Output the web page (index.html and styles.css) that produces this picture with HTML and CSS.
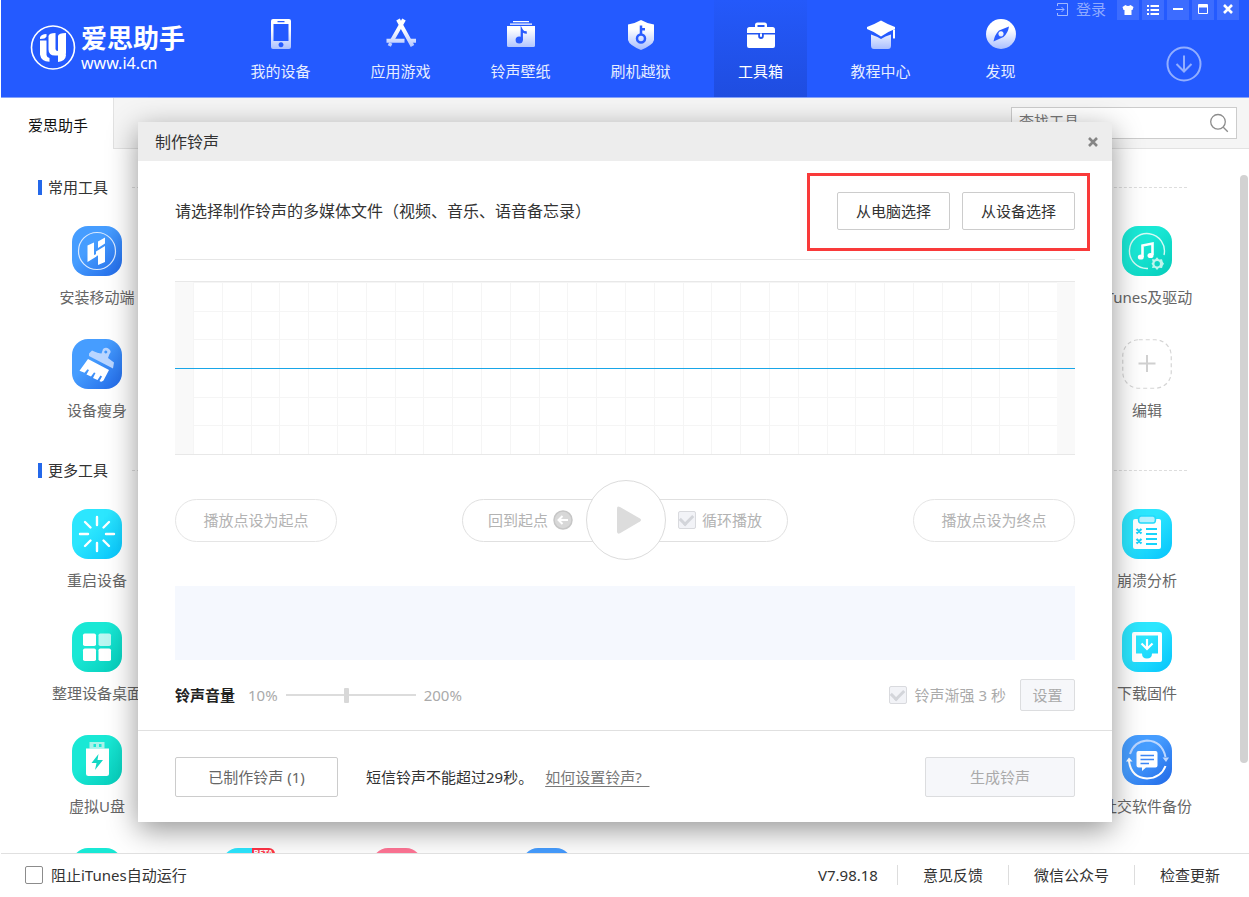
FILE: index.html
```html
<!DOCTYPE html>
<html lang="zh-CN">
<head>
<meta charset="utf-8">
<title>爱思助手</title>
<link rel="stylesheet" href="styles.css">
</head>
<body>
<svg class="defs" width="0" height="0" aria-hidden="true">
  <defs>
    <linearGradient id="fade" x1="0" y1="0" x2="0" y2="32" gradientUnits="userSpaceOnUse"><stop offset=".35" stop-color="#fff"/><stop offset="1" stop-color="#a6bcff"/></linearGradient>
  </defs>
</svg>
<div class="app">
  <header class="top">
    <a class="logo" href="#">
      <svg width="46" height="46" viewBox="0 0 46 46">
        <circle cx="23" cy="23.500" r="21.500" fill="none" stroke="#fff" stroke-width="1.600"/>
        <path fill="#fff" d="M10 13.500q1-3.500 6.500-3.500v2.500q-1 2.500-6.500 2.500zM10 16.500h6.500V31q.3 2.500 3 3v3.800q-8.500-.3-9.500-7.300zM18.500 12q.5-3 7-3v16q0 2 2.500 2V12q.5-3 8-3v20q-.5 1.500 0 2.200-.5 6-8 6.800V31.500h-3q-6.500 0-6.500-6z"/>
      </svg>
      <span class="logo-words"><span class="logo-name">爱思助手</span><span class="logo-url">www.i4.cn</span></span>
    </a>
    <nav class="nav">
      <a class="nav-item" href="#">
        <svg class="nav-icon" viewBox="0 0 32 32"><path fill="url(#fade)" fill-rule="evenodd" d="M8 1h16a2 2 0 0 1 2 2v26a2 2 0 0 1-2 2H8a2 2 0 0 1-2-2V3a2 2 0 0 1 2-2zM8.500 6v17h15V6zM12.500 3v1.200h7V3zM16 24.200a2.500 2.500 0 1 0 .01 0z"/></svg>
        <span>我的设备</span>
      </a>
      <a class="nav-item" href="#">
        <svg class="nav-icon" viewBox="0 0 32 32"><g fill="none" stroke="url(#fade)" stroke-width="4"><path d="M13 1.500L27.500 28M19 1.500L7.300 22"/><path d="M1.500 22.700h18M25.500 22.700h5.500"/><path d="M5.800 25l-1.500 3" stroke-width="3.500"/></g></svg>
        <span>应用游戏</span>
      </a>
      <a class="nav-item" href="#">
        <svg class="nav-icon" viewBox="0 0 32 32"><path fill="#fff" d="M8 3h16v1.300H8zM5 5.500h22v1.300H5z"/><path fill="url(#fade)" d="M2 8h28v19.500a1.500 1.500 0 0 1-1.500 1.500h-25A1.500 1.500 0 0 1 2 27.500z"/><circle cx="14.200" cy="22" r="3.600" fill="#2a5cff"/><path d="M16.800 22.500V12q1.500 2.700 5 2.500" fill="none" stroke="#2a5cff" stroke-width="2.300"/></svg>
        <span>铃声壁纸</span>
      </a>
      <a class="nav-item" href="#">
        <svg class="nav-icon" viewBox="0 0 32 32"><path fill="url(#fade)" d="M16 2q6 3.500 13 4.500V22q-1 5-13 10Q4 27 3 22V6.500Q10 5.500 16 2z"/><circle cx="16" cy="20.500" r="4" fill="none" stroke="#2a5cff" stroke-width="2.500"/><path d="M16 17V7.500M16 11.300h4" stroke="#2a5cff" stroke-width="2.500" fill="none"/></svg>
        <span>刷机越狱</span>
      </a>
      <a class="nav-item nav-active" href="#">
        <svg class="nav-icon" viewBox="0 0 32 32"><path fill="#fff" fill-rule="evenodd" d="M2 15V11.500Q2 9 4.500 9H10V7q0-2.500 2.500-2.500h7Q22 4.500 22 7v2h5.500Q30 9 30 11.500V15zM12.500 9h7V7h-7zM2 16.500h11.200v1.700a2.800 2.800 0 0 0 5.600 0v-1.700H30V28a2 2 0 0 1-2 2H4a2 2 0 0 1-2-2z"/><path d="M15 15.500h2V18a1 1 0 0 1-2 0z" fill="#fff"/></svg>
        <span>工具箱</span>
      </a>
      <a class="nav-item" href="#">
        <svg class="nav-icon" viewBox="0 0 32 32"><path fill="#fff" d="M16 2.500q6 3.500 14 6.500v2q-8 3-14 7.500Q10 14 2 11V9Q10 6 16 2.500z"/><path fill="#fff" d="M28 11.500h2V20q-1 1.500-2 0z"/><path fill="url(#fade)" d="M6 16.500q6 2 10 4.500 4-3 10-4.500v11q0 3.500-3 3.500H9q-3 0-3-3.500z"/></svg>
        <span>教程中心</span>
      </a>
      <a class="nav-item" href="#">
        <svg class="nav-icon" viewBox="0 0 32 32"><circle cx="16" cy="16" r="15" fill="url(#fade)"/><path fill="#2a5cff" fill-rule="evenodd" d="M24 8.500q-1 6.500-5.500 10.500L8.500 23.500Q9.500 17 14 12.500zM16 13.300a2.600 2.600 0 1 0 .01 0z"/></svg>
        <span>发现</span>
      </a>
    </nav>
    <div class="top-side">
      <div class="win-bar">
        <a class="login" href="#">
          <svg width="13" height="15" viewBox="0 0 13 15" fill="none" stroke="#a0b8ff"><path d="M1.500 4V1.500h10v12h-10V11M0 7.500h8M5.500 5l2.500 2.500L5.500 10"/></svg>
          登录
        </a>
        <div class="win-buttons">
          <button class="win-btn" aria-label="换肤"><svg width="12" height="12" viewBox="0 0 12 12"><path fill="#fff" d="M3.500 1Q6 3 8.500 1L11.500 3 10.500 6H9.500v5h-7V6H1.500L.5 3z"/></svg></button>
          <button class="win-btn" aria-label="菜单"><svg width="12" height="12" viewBox="0 0 12 12"><path stroke="#fff" stroke-width="2" d="M0 2h2M3.500 2H12M0 6h2M3.500 6H12M0 10h2M3.500 10H12"/></svg></button>
          <button class="win-btn" aria-label="最小化"><svg width="12" height="12" viewBox="0 0 12 12"><path stroke="#fff" stroke-width="2" d="M1 5h10"/></svg></button>
          <button class="win-btn" aria-label="最大化"><svg width="12" height="12" viewBox="0 0 12 12"><path fill="#fff" fill-rule="evenodd" d="M2 0h8a1 1 0 0 1 1 1v8a1 1 0 0 1-1 1H2a1 1 0 0 1-1-1V1a1 1 0 0 1 1-1zm0 3.500V9h8V3.500z"/></svg></button>
          <button class="win-btn" aria-label="关闭窗口"><svg width="12" height="12" viewBox="0 0 12 12"><path stroke="#fff" stroke-width="2.600" d="M2 1l8 8M10 1l-8 8"/></svg></button>
        </div>
      </div>
      <button class="download" aria-label="下载"><svg width="36" height="36" viewBox="0 0 36 36" fill="none" stroke="#92aeff" stroke-width="2"><circle cx="18" cy="18" r="16.500"/><path d="M18 9.500v16M10.500 18l7.500 7.500 7.500-7.500"/></svg></button>
    </div>
  </header>

  <div class="tabs">
    <a class="tab" href="#">爱思助手</a>
    <label class="search">
      <input class="search-input" type="text" placeholder="查找工具" aria-label="查找工具">
      <svg width="20" height="20" viewBox="0 0 20 20" fill="none" stroke="#8c8c8c" stroke-width="1.300"><circle cx="9" cy="8.800" r="7.300"/><path d="M14.300 14.300l4.500 4.500"/></svg>
    </label>
  </div>

  <div class="content">
    <main class="tools">
      <h2 class="section-title">常用工具</h2>
      <div class="tool-grid">
        <a class="tool" href="#">
          <svg class="tool-icon blue" viewBox="0 0 50 50"><circle cx="25" cy="25" r="18.500" fill="none" stroke="#d9e9ff" stroke-width="1.200"/><path fill="#fff" d="M15.500 19.500l6.500-3v12.500l2.500-1v2.500l-9 5.500zM26 15.500l7-4V17.500L26 22zM24 25.500l9-5.500V36l-7 3V29.500l-2 .5z"/></svg>
          <span>安装移动端</span>
        </a>
        <a class="tool tool-last" href="#">
          <svg class="tool-icon green" viewBox="0 0 50 50"><path d="M26 42.500A17.500 17.500 0 1 1 42 29" fill="none" stroke="#d4faf4" stroke-width="1.400"/><path d="M20.500 31V19.500l10-2v11.500" fill="none" stroke="#fff" stroke-width="2.600"/><ellipse cx="18.800" cy="31" rx="3" ry="2.600" fill="#fff"/><ellipse cx="28.500" cy="29.500" rx="3" ry="2.600" fill="#fff"/><path d="M35 31.300l2 2.300 3-.3.800 2.700 1.200 1.700-1.200 1.700-.8 2.700-3-.3-2 2.300-2-2.300-3 .3.700-2.700-1.200-1.700 1.200-1.700-.7-2.700 3 .3z" fill="#bff5ed"/><circle cx="35.200" cy="37.700" r="2.700" fill="#0fd6c4"/></svg>
          <span>iTunes及驱动</span>
        </a>
        <a class="tool" href="#">
          <svg class="tool-icon blue" viewBox="0 0 50 50"><path fill="#b9d5ff" fill-rule="evenodd" d="M17 14.500l3-3q6 3 9.500 3L31 10q3-2.500 6 0t.5 5L36 19l6 4.500-1 6L17 17zM33.800 11.500a1.500 1.500 0 1 0 .01 0z"/><path fill="#fff" d="M16 20l21 11-5.500 10.500q-2 2-4 .5l2.500-4.500-1.500-1-3 4.500-4.500-2 2.500-5-1.500-.5-3 4-4.500-2 2.500-4.500-1.500-.8-3 3.500-5-2z"/></svg>
          <span>设备瘦身</span>
        </a>
        <a class="tool tool-last" href="#">
          <svg class="tool-icon" viewBox="0 0 50 50"><rect x=".75" y=".75" width="48.500" height="48.500" rx="16" fill="none" stroke="#d5d5d5" stroke-width="1.200" stroke-dasharray="4 3"/><path d="M25 16v17M16.500 24.500h17" stroke="#d0d0d0" stroke-width="2"/></svg>
          <span>编辑</span>
        </a>
      </div>

      <h2 class="section-title">更多工具</h2>
      <div class="tool-grid">
        <a class="tool" href="#">
          <svg class="tool-icon cyan" viewBox="0 0 50 50"><path d="M25 8v8M25 34v8M8 25h8M34 25h8M13 13l5.500 5.500M31.500 31.500L37 37M13 37l5.500-5.500M31.500 18.500L37 13" stroke="#fff" stroke-width="2.400" stroke-linecap="round"/></svg>
          <span>重启设备</span>
        </a>
        <a class="tool tool-last" href="#">
          <svg class="tool-icon cyan" viewBox="0 0 50 50"><path fill="#fff" d="M13 10h24a2 2 0 0 1 2 2v26a2 2 0 0 1-2 2H13a2 2 0 0 1-2-2V12a2 2 0 0 1 2-2z"/><path fill="#b4f1ff" stroke="#22dafb" stroke-width="1.500" d="M19 7h12q2.500 0 2.500 3.500T31 14H19q-2.500 0-2.500-3.500T19 7z"/><path stroke="#18d4fb" stroke-width="2.200" d="M24 20h11M24 25h11M24 30h11M24 35h11M14.500 20l5 4.500M19.500 20l-5 4.500M14.500 30l5 4.500M19.500 30l-5 4.500"/></svg>
          <span>崩溃分析</span>
        </a>
        <a class="tool" href="#">
          <svg class="tool-icon green" viewBox="0 0 50 50"><g fill="#fff"><rect x="11" y="11.500" width="13" height="12.500" rx="1.800"/><rect x="26.500" y="11.500" width="12.500" height="12.500" rx="1.800" opacity=".7"/><rect x="11" y="26.500" width="13" height="12.500" rx="1.800"/><rect x="26.500" y="26.500" width="12.500" height="12.500" rx="1.800"/></g></svg>
          <span>整理设备桌面</span>
        </a>
        <a class="tool tool-last" href="#">
          <svg class="tool-icon cyan" viewBox="0 0 50 50"><path fill="#fff" fill-rule="evenodd" d="M12 10h26a2 2 0 0 1 2 2v26a2 2 0 0 1-2 2H12a2 2 0 0 1-2-2V12a2 2 0 0 1 2-2zM14 13.500v18h6q0 5 5 5t5-5h6v-18z"/><path d="M25 17v10M19.500 21.500l5.500 5.500 5.500-5.500" fill="none" stroke="#fff" stroke-width="2.200"/></svg>
          <span>下载固件</span>
        </a>
        <a class="tool" href="#">
          <svg class="tool-icon green" viewBox="0 0 50 50"><path fill="#a9f2e9" fill-rule="evenodd" d="M17.500 7h15v6.500h-15zM21.500 9v3h2.500V9zM27 9v3h2.500V9z"/><path fill="#fff" d="M14 13.500h23v25q0 2.500-2.500 2.500h-18Q14 41 14 38.500z"/><path fill="#12d8c5" d="M26.500 19l-7 9h5l-1.500 7 8-10h-5.500z"/></svg>
          <span>虚拟U盘</span>
        </a>
        <a class="tool tool-last" href="#">
          <svg class="tool-icon blue" viewBox="0 0 50 50"><g fill="none" stroke-width="2"><path d="M8 19q4-12.500 17-13.500Q40 6 43.500 22" stroke="#bcd7ff"/><path d="M43.500 31Q39 43 25 43.500 9 42.500 7 26" stroke="#fff"/></g><path fill="#fff" d="M4 26.500l3-4 3.500 4zM16.500 16h17q2 0 2 2v12.500q0 2-2 2H24L20 36v-3.500h-3.500q-2 0-2-2V18q0-2 2-2z"/><path fill="#bcd7ff" d="M40.500 22.500h6.500l-3 4.500z"/><path d="M18.500 20.500H32M18.500 24.500H32M18.500 28.500H27" stroke="#3b86f6" stroke-width="1.600"/></svg>
          <span>社交软件备份</span>
        </a>
        <a class="tool" href="#" aria-label="更多工具 1"><span class="tool-icon green"></span></a>
        <a class="tool" href="#" aria-label="更多工具 2"><span class="tool-icon cyan beta-icon"><span class="beta">BETA</span></span></a>
        <a class="tool" href="#" aria-label="更多工具 3"><span class="tool-icon pink"></span></a>
        <a class="tool" href="#" aria-label="更多工具 4"><span class="tool-icon blue"></span></a>
      </div>
    </main>
    <div class="scroll-track"><div class="scroll-thumb"></div></div>
  </div>

  <footer class="status">
    <label class="status-check"><input class="box" type="checkbox">阻止iTunes自动运行</label>
    <div class="status-links">
      <span class="status-item">V7.98.18</span>
      <a class="status-item" href="#">意见反馈</a>
      <a class="status-item" href="#">微信公众号</a>
      <a class="status-item" href="#">检查更新</a>
    </div>
  </footer>

  <div class="overlay">
    <section class="dialog" role="dialog" aria-labelledby="dialog-title">
      <div class="dialog-head">
        <h1 class="dialog-title" id="dialog-title">制作铃声</h1>
        <button class="dialog-close" aria-label="关闭"><svg width="10" height="10" viewBox="0 0 10 10"><path stroke="#858585" stroke-width="2.600" d="M1 1l8 8M9 1l-8 8"/></svg></button>
      </div>
      <div class="dialog-body">
        <div class="pick">
          <p class="pick-text">请选择制作铃声的多媒体文件（视频、音乐、语音备忘录）</p>
          <div class="pick-buttons">
            <button class="btn btn-pick">从电脑选择</button>
            <button class="btn btn-pick">从设备选择</button>
          </div>
        </div>
        <div class="wave"><div class="wave-grid"></div></div>
        <div class="player">
          <button class="pill" disabled>播放点设为起点</button>
          <div class="player-mid">
            <button class="rewind" disabled>回到起点
              <svg width="20" height="20" viewBox="0 0 20 20"><circle cx="10" cy="10" r="9" fill="#d8d8d8" stroke="#c6c6c6" stroke-width="1.500"/><path d="M15 10H6M9.500 6L5.500 10l4 4" fill="none" stroke="#fff" stroke-width="2"/></svg>
            </button>
            <button class="play" disabled aria-label="播放"><svg width="26" height="28" viewBox="0 0 26 28"><path fill="#dcdcdc" d="M1 2.500Q1-.5 4 1L24 12.500q2 1.500 0 3L4 27.300Q1 28.500 1 25.500z"/></svg></button>
            <label class="loop"><input class="box" type="checkbox" checked disabled>循环播放</label>
          </div>
          <button class="pill" disabled>播放点设为终点</button>
        </div>
        <div class="clip"></div>
        <div class="volume">
          <label class="volume-name" for="vol">铃声音量</label>
          <span>10%</span>
          <input class="slider" id="vol" type="range" min="10" max="200" value="99" disabled>
          <span>200%</span>
          <label class="fade-in"><input class="box" type="checkbox" checked disabled>铃声渐强 3 秒</label>
          <button class="btn btn-set" disabled>设置</button>
        </div>
      </div>
      <div class="dialog-foot">
        <button class="btn btn-made">已制作铃声 (1)</button>
        <p class="foot-note">短信铃声不能超过29秒。</p>
        <a class="foot-link" href="#">如何设置铃声?&nbsp;&nbsp;</a>
        <button class="btn btn-make" disabled>生成铃声</button>
      </div>
    </section>
  </div>
</div>
</body>
</html>
```
FILE: styles.css
```css
* { box-sizing: border-box; }

body {
  margin: 0;
  background: #fff;
  color: #333;
  font-family: "Noto Sans", "Noto Sans CJK SC", sans-serif;
  font-size: 15px;
  line-height: 20px;
}

h1, h2, p { margin: 0; font-weight: 400; }
a { color: inherit; text-decoration: none; }
button, input { font: inherit; }
button { padding: 0; border: 0; background: none; color: inherit; }
.defs { position: absolute; }

.app {
  position: relative;
  display: flex;
  flex-direction: column;
  height: 100vh;
  border-left: 1px solid #fff;
  overflow: hidden;
}

/* Header */
.top {
  display: flex;
  flex: none;
  height: 98px;
  background: #245aff;
  border-bottom: 1px solid #84a2fb;
  color: #e6edff;
}
.logo {
  display: flex;
  align-items: flex-start;
  gap: 5px;
  width: 233px;
  padding: 24px 0 0 29px;
  color: #fff;
}
.logo-words { display: flex; flex-direction: column; gap: 2px; }
.logo-name { font-size: 26px; line-height: 28px; font-weight: 700; white-space: nowrap; }
.logo-url { font-size: 16px; line-height: 18px; }
.nav { display: flex; gap: 27px; }
.nav-item {
  display: flex;
  flex-direction: column;
  align-items: center;
  gap: 11px;
  width: 93px;
  padding-top: 18px;
}
.nav-active { background: linear-gradient(#2459fa, #1f4de0); color: #fff; }
.nav-icon { width: 32px; height: 32px; }
.top-side {
  display: flex;
  flex: 1;
  flex-direction: column;
  align-items: flex-end;
  gap: 26px;
}
.win-bar { display: flex; gap: 11px; padding-right: 10px; }
.login { display: flex; align-items: center; gap: 7px; height: 18px; color: #8faaff; white-space: nowrap; }
.win-buttons { display: flex; gap: 3px; }
.win-btn {
  display: flex;
  align-items: center;
  justify-content: center;
  width: 22px;
  height: 20px;
  background: #3c6cff;
}
.download { width: 36px; height: 36px; margin-right: 47px; }

/* Tab bar */
.tabs {
  display: flex;
  flex: none;
  align-items: flex-start;
  justify-content: space-between;
  height: 51px;
  padding-right: 12px;
  background: #f5f5f5;
  border-bottom: 1px solid #e2e2e2;
}
.tab {
  height: 51px;
  padding: 17px 25px 0 27px;
  background: #fff;
  border-right: 1px solid #e2e2e2;
  color: #111;
}
.search {
  display: flex;
  align-items: center;
  width: 226px;
  height: 32px;
  margin-top: 9px;
  padding: 0 7px;
  background: #fff;
  border: 1px solid #ccc;
}
.search-input { flex: 1; min-width: 0; height: 24px; padding: 0; border: 0; outline: 0; margin-bottom: 4px; }
.search-input::placeholder { color: #777; }

/* Tool area */
.content { display: flex; flex: 1; min-height: 0; }
.tools { flex: 1; padding: 28px 18px 0 21px; overflow: hidden; }
.section-title {
  display: flex;
  align-items: center;
  margin: 0 35px 29px 16px;
  font-size: 15px;
  line-height: 20px;
}
.section-title::before { content: ""; width: 4px; height: 15px; margin-right: 6px; background: #2468ea; }
.section-title::after { content: ""; flex: 1; margin-left: 24px; border-top: 1px dashed #ddd; }
.tool-grid {
  display: grid;
  grid-template-columns: repeat(8, 1fr);
  row-gap: 32px;
  margin-bottom: 40px;
}
.tool {
  display: flex;
  flex-direction: column;
  align-items: center;
  gap: 11px;
  color: #666;
  white-space: nowrap;
}
.tool-last { grid-column: 8; }
.tool-icon { flex: none; width: 50px; height: 50px; border-radius: 16px; }
.blue { background: linear-gradient(135deg, #469dff 40%, #2067e6); }
.green { background: linear-gradient(135deg, #19e8d5 40%, #05cbb9); }
.cyan { background: linear-gradient(135deg, #2ce6fe 40%, #05c3fc); }
.pink { background: #ff7595; }
.beta-icon { position: relative; }
.beta {
  position: absolute;
  top: 0;
  right: -3px;
  padding: 0 2px;
  background: #ff3346;
  border-radius: 0 6px 0 0;
  color: #fff;
  font-size: 8px;
  line-height: 10px;
  font-weight: 700;
}
.scroll-track { display: flex; flex: none; width: 9px; padding: 26px 1px 90px 0; }
.scroll-thumb { flex: 1; background: #d2d2d2; border-radius: 4px; }

/* Status bar */
.status {
  position: relative;
  z-index: 2;
  display: flex;
  flex: none;
  align-items: center;
  justify-content: space-between;
  height: 44px;
  padding: 0 4px 2px 24px;
  background: #fff;
  border-top: 1px solid #e0e0e0;
}
.status-check { display: flex; align-items: center; gap: 8px; }
.status-links { display: flex; }
.status-item { padding: 0 25px; }
.status-item:first-child { padding-right: 19px; }
.status-item + .status-item { border-left: 1px solid #ddd; }

.box {
  display: grid;
  place-items: center;
  flex: none;
  appearance: none;
  width: 18px;
  height: 18px;
  margin: 0;
  background: #fff;
  border: 1px solid #8c8c8c;
  border-radius: 2px;
}
.box:disabled { background: #f2f3f7; border-color: #d9dade; }
.box:checked::after {
  content: "";
  width: 10px;
  height: 6px;
  margin-bottom: 3px;
  border: solid #d3d5da;
  border-width: 0 0 3px 3px;
  transform: rotate(-45deg);
}

/* Dialog */
.overlay {
  position: absolute;
  z-index: 1;
  inset: 0;
  display: flex;
  align-items: flex-start;
  justify-content: center;
  padding: 122px 60px 0;
  pointer-events: none;
}
.dialog {
  width: 100%;
  max-width: 974px;
  background: #fff;
  box-shadow: 0 8px 28px rgba(0, 0, 0, .42);
  pointer-events: auto;
}
.dialog-head {
  display: flex;
  align-items: center;
  justify-content: space-between;
  height: 39px;
  padding: 0 14px 0 17px;
  background: #ededed;
}
.dialog-title { font-size: 16px; line-height: 20px; }
.dialog-close { display: flex; }
.dialog-body { padding: 0 37px; }

.btn { height: 40px; background: #fff; border: 1px solid #ccc; border-radius: 2px; }
.btn:disabled { background: #f6f7fa; border-color: #dcdddf; color: #aaa; }

.pick {
  display: flex;
  align-items: center;
  justify-content: space-between;
  height: 99px;
  padding-top: 2px;
  border-bottom: 1px solid #e6e6e6;
}
.pick-text { font-size: 16px; }
.pick-buttons { position: relative; display: flex; gap: 12px; }
.pick-buttons::after {
  content: "";
  position: absolute;
  inset: -19px -15px -21px -30px;
  border: 3px solid #f93a3a;
  pointer-events: none;
}
.btn-pick { width: 113px; height: 38px; }

.wave {
  position: relative;
  height: 174px;
  margin: 21px 0 25px;
  padding: 0 18px;
  background: #f9f9f9;
  border: solid #e8e8e8;
  border-width: 1px 0;
}
.wave-grid {
  height: 100%;
  background:
    repeating-linear-gradient(90deg, #f5f5f5 0 1px, transparent 1px calc(100% / 30)),
    repeating-linear-gradient(#f5f5f5 0 1px, transparent 1px calc(100% / 6)),
    #fff;
}
.wave::after {
  content: "";
  position: absolute;
  top: 86px;
  left: 0;
  right: 0;
  border-top: 1px solid #18a6e8;
}

.player { display: flex; align-items: center; justify-content: space-between; height: 80px; color: #b3b3b3; }
.pill { width: 162px; height: 43px; border: 1px solid #e5e5e5; border-radius: 22px; }
.player-mid {
  display: flex;
  align-items: center;
  justify-content: space-between;
  width: 326px;
  height: 43px;
  padding: 0 25px;
  border: 1px solid #e0e0e0;
  border-radius: 22px;
}
.rewind { display: flex; align-items: center; gap: 5px; }
.play {
  display: flex;
  align-items: center;
  justify-content: center;
  width: 80px;
  height: 80px;
  padding-left: 6px;
  background: #fff;
  border: 1px solid #dcdcdc;
  border-radius: 50%;
}
.loop { display: flex; align-items: center; gap: 6px; }

.clip { height: 74px; margin-top: 26px; background: #f5f8fe; }

.volume { display: flex; align-items: center; height: 70px; color: #aaa; }
.volume-name { margin-right: 13px; color: #222; font-weight: 700; }
.slider {
  appearance: none;
  width: 130px;
  height: 16px;
  margin: 0 8px;
  background: linear-gradient(#dcdcdc, #dcdcdc) center / 100% 2px no-repeat;
}
.slider::-webkit-slider-thumb { appearance: none; width: 5px; height: 15px; background: #d8d8d8; border-radius: 1px; }
.fade-in { display: flex; align-items: center; gap: 8px; margin: 0 14px 0 auto; }
.btn-set { width: 55px; height: 32px; }

.dialog-foot {
  display: flex;
  align-items: center;
  height: 92px;
  padding: 0 37px;
  border-top: 1px solid #e0e0e0;
}
.btn-made { width: 163px; color: #666; }
.foot-note { margin: 0 12px 0 28px; }
.foot-link { color: #777; text-decoration: underline; text-underline-offset: 3px; }
.btn-make { width: 150px; margin-left: auto; }
```
